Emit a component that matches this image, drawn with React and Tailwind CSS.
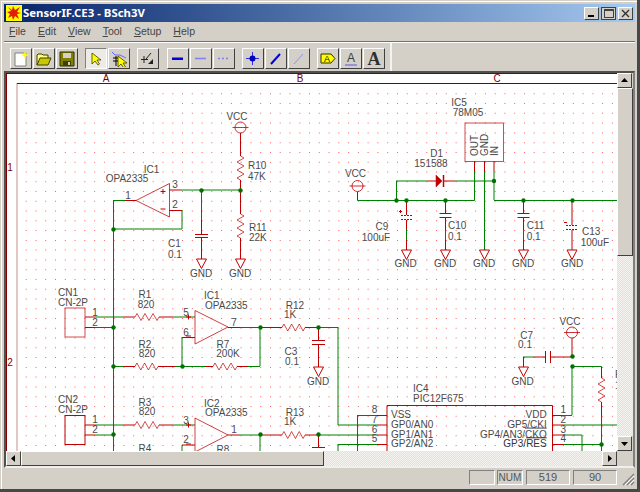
const G = '#008000'
const R = '#c00000'

// [x1, y1, x2, y2, colour]; integer coords give the pale, two-pixel lines of the picture
const wires = [
  // IC1 upper
  [240.5, 133, 240.5, 156, R], [240.5, 180, 240.5, 190, R], [169, 190, 181, 190, R], [181, 190, 240.5, 190, G],
  [201.5, 190, 201.5, 220, G], [201.5, 220, 201.5, 234, R], [201.5, 237, 201.5, 259, R],
  [240.5, 190, 240.5, 214, R], [240.5, 238, 240.5, 259, R],
  [125, 200.5, 136, 200.5, R], [113.5, 200.5, 125, 200.5, G], [113.5, 200, 113.5, 451, G],
  [169, 210.5, 182, 210.5, R], [182, 210, 182, 229, G], [113.5, 229, 182, 229, G],
  // CN1, IC1 lower
  [85, 317, 95, 317, R], [95, 317, 123, 317, G], [123, 317, 135, 317, R], [159, 317, 173, 317, R], [173, 317, 195, 317, G],
  [85, 327.5, 95, 327.5, R], [95, 327.5, 113.5, 327.5, G],
  [228, 327.5, 240, 327.5, R], [240, 327.5, 260, 327.5, G], [260, 327.5, 282, 327.5, R], [305, 327.5, 318, 327.5, R],
  [182, 337.5, 195, 337.5, R], [182, 337, 182, 366, G],
  [113.5, 366.5, 124, 366.5, G], [124, 366.5, 135, 366.5, R], [158, 366.5, 175, 366.5, R], [175, 366.5, 205, 366.5, G],
  [205, 366.5, 213, 366.5, R], [237, 366.5, 248, 366.5, R], [248, 366.5, 260, 366.5, G], [260, 327, 260, 366, G],
  [318.5, 327, 318.5, 340, R], [318.5, 344, 318.5, 367, R],
  // CN2, IC2
  [85, 425, 95, 425, R], [95, 425, 123, 425, G], [123, 425, 135, 425, R], [159, 425, 173, 425, R], [173, 425, 195, 425, G],
  [85, 435, 95, 435, R], [95, 435, 113.5, 435, G],
  [228, 435, 240, 435, R], [240, 435, 260, 435, G], [260, 435, 282, 435, R], [305, 435, 318, 435, R],
  [182, 445, 195, 445, R], [182, 445, 182, 451, G], [260, 435, 260, 451, G], [318.5, 435, 318.5, 447, R],
  // power input
  [357.5, 192, 357.5, 200.5, R], [357.5, 200.5, 474.5, 200.5, G], [474.5, 172, 474.5, 200.5, G], [474.5, 161, 474.5, 172, R],
  [396.5, 181, 396.5, 200.5, G], [396, 181, 428, 181, G], [428, 181, 436, 181, R], [443, 181, 455, 181, R], [455, 181, 494, 181, G],
  [484.5, 161, 484.5, 172, R], [484.5, 172, 484.5, 250, G], [494, 161, 494, 172, R], [494, 172, 494, 200, G],
  [494, 200.5, 617, 200.5, G],
  [406.5, 200, 406.5, 215, R], [406.5, 220, 406.5, 230, R], [406.5, 230, 406.5, 240, G], [406.5, 240, 406.5, 250, R],
  [445.5, 200, 445.5, 213, R], [445.5, 217, 445.5, 230, R], [445.5, 230, 445.5, 240, G], [445.5, 240, 445.5, 250, R],
  [523.5, 200, 523.5, 213, R], [523.5, 217, 523.5, 230, R], [523.5, 230, 523.5, 240, G], [523.5, 240, 523.5, 250, R],
  [572, 200, 572, 225, R], [572, 230, 572, 250, R],
  // IC4 and around it
  [318, 327.5, 338, 327.5, G], [338, 327, 338, 425, G], [338, 425, 377, 425, G], [377, 425, 387, 425, R],
  [357.5, 415.5, 377, 415.5, G], [377, 415.5, 387, 415.5, R], [357.5, 415, 357.5, 451, G],
  [318, 435, 377, 435, G], [377, 435, 387, 435, R], [338, 444.5, 377, 444.5, G], [377, 444.5, 387, 444.5, R], [338, 444, 338, 451, G],
  [553, 415.5, 563, 415.5, R], [563, 415.5, 572, 415.5, G], [572, 366, 572, 415, G], [572, 338, 572, 357, R],
  [553, 425, 563, 425, R], [563, 425, 617, 425, G], [553, 435, 563, 435, R], [563, 435, 582, 435, G], [582, 435, 582, 451, G],
  [553, 444.5, 563, 444.5, R], [563, 444.5, 601.5, 444.5, G], [601.5, 444, 601.5, 451, G], [601.5, 415, 601.5, 444, G],
  [601.5, 402, 601.5, 415, R], [601.5, 366.5, 601.5, 378, R], [572, 366.5, 601.5, 366.5, G],
  [550, 357, 572, 357, R], [533, 357, 545, 357, R], [523, 357, 533, 357, G], [523.5, 357, 523.5, 367, R],
]

const dots = [
  [113.5, 229.5], [201.5, 190.5], [240.5, 190.5], [113.5, 327.5], [113.5, 366.5], [182.5, 366.5], [260.5, 327.5], [318.5, 327.5],
  [113.5, 434.5], [260.5, 434.5], [318.5, 434.5], [396.5, 200.5], [406.5, 200.5], [445.5, 200.5], [494, 181], [523.5, 200.5],
  [572.5, 200.5], [572.5, 356.5], [572.5, 366.5], [601.5, 444.5],
]

const gndMarks = [
  [201.5, 259], [240.5, 259], [406.5, 250], [445.5, 250], [484.5, 250], [523.5, 250], [572, 250], [318.5, 367], [523.5, 367],
]

// [x, y centre, text, anchor]
const labels = [
  [237, 116, 'VCC', 'middle'], [248, 165, 'R10'], [248, 176, '47K'], [249, 227, 'R11'], [249, 237, '22K'],
  [151.5, 169, 'IC1', 'middle'], [127, 178, 'OPA2335', 'middle'], [175, 184, '3', 'middle'], [175, 204, '2', 'middle'], [128, 195, '1', 'middle'],
  [168, 243, 'C1'], [168, 254, '0.1'],
  [201, 273, 'GND', 'middle'], [240, 273, 'GND', 'middle'], [405.7, 263.5, 'GND', 'middle'], [445, 263.5, 'GND', 'middle'],
  [484, 263.5, 'GND', 'middle'], [523, 263.5, 'GND', 'middle'], [572, 263.5, 'GND', 'middle'], [318, 381, 'GND', 'middle'], [522.7, 381, 'GND', 'middle'],
  [58, 292, 'CN1'], [58, 302, 'CN-2P'], [95, 312, '1', 'middle'], [95, 322, '2', 'middle'], [145, 294, 'R1', 'middle'], [146, 304, '820', 'middle'],
  [204, 295, 'IC1'], [205, 305, 'OPA2335'], [186, 312, '5', 'middle'], [186, 332, '6', 'middle'], [234, 322, '7', 'middle'],
  [295, 305, 'R12', 'middle'], [290, 314, '1K', 'middle'], [145, 344, 'R2', 'middle'], [147, 353, '820', 'middle'],
  [223, 344, 'R7', 'middle'], [228, 353, '200K', 'middle'], [291, 351, 'C3', 'middle'], [292, 361, '0.1', 'middle'],
  [58, 399, 'CN2'], [58, 409, 'CN-2P'], [95, 419, '1', 'middle'], [95, 429, '2', 'middle'], [145, 402, 'R3', 'middle'], [147, 411, '820', 'middle'],
  [204, 403, 'IC2'], [205, 412, 'OPA2335'], [186, 420, '3', 'middle'], [186, 439, '2', 'middle'], [234, 429, '1', 'middle'],
  [295, 412, 'R13', 'middle'], [290, 421, '1K', 'middle'], [145, 448, 'R4', 'middle'], [223, 449, 'R8', 'middle'],
  [459, 102, 'IC5', 'middle'], [468, 112, '78M05', 'middle'], [355.5, 173, 'VCC', 'middle'], [436.7, 153, 'D1', 'middle'], [431, 163, '151588', 'middle'],
  [382, 226, 'C9', 'middle'], [376, 237, '100uF', 'middle'], [448, 225, 'C10'], [448, 236, '0.1'], [526.7, 225, 'C11'], [526.7, 236, '0.1'],
  [582, 231, 'C13'], [580.7, 242, '100uF'],
  [570, 321, 'VCC', 'middle'], [526.7, 335, 'C7', 'middle'], [525, 344, '0.1', 'middle'], [615, 374, 'R'], [615, 385, '1'],
  [413, 388, 'IC4'], [413, 398, 'PIC12F675'],
  [374.5, 409, '8', 'middle'], [374.5, 419, '7', 'middle'], [374.5, 429, '6', 'middle'], [374.5, 438.6, '5', 'middle'],
  [391, 414.7, 'VSS'], [391, 424.3, 'GP0/AN0'], [391, 434, 'GP1/AN1'], [391, 443.7, 'GP2/AN2'],
  [546.7, 414.7, 'VDD', 'end'], [546.7, 424.3, 'GP5/CKI', 'end'],
  [563.3, 409, '1', 'middle'], [563.3, 419, '2', 'middle'], [563.3, 429, '3', 'middle'], [563.3, 438.6, '4', 'middle'],
]

const gridDots = (() => {
  let d = ''
  for (let x = 25.7; x < 617; x += 9.77) {
    for (let y = 93.3; y < 451; y += 9.77) d += `M${x.toFixed(1)} ${y.toFixed(1)}h1v1h-1z`
  }
  return d
})()

function zigH(x1, x2, y) {
  const s = (x2 - x1) / 6
  let d = `M${x1} ${y}`
  for (let i = 0; i < 6; i++) d += `L${x1 + s * (i + 0.5)} ${y + (i % 2 ? 3.5 : -3.5)}`
  return d + `L${x2} ${y}`
}

function zigV(x, y1, y2) {
  const s = (y2 - y1) / 6
  let d = `M${x} ${y1}`
  for (let i = 0; i < 6; i++) d += `L${x + (i % 2 ? -3.5 : 3.5)} ${y1 + s * (i + 0.5)}`
  return d + `L${x} ${y2}`
}

const resistors = [
  zigV(240.5, 156, 180), zigV(240.5, 214, 238), zigV(601.5, 378, 402),
  zigH(135, 159, 317), zigH(135, 158, 366.5), zigH(213, 237, 366.5), zigH(282, 305, 327.5),
  zigH(135, 159, 425), zigH(282, 305, 435),
]

function OpAmp({ tipX, tipY, top, bottom, plusY, minusY, baseX }) {
  const midX = baseX - 6.5
  return (
    <g>
      <path d={`M${baseX} ${top}L${tipX} ${tipY}L${baseX} ${bottom}Z`} fill="none" stroke={R} strokeOpacity="0.75" />
      <path d={`M${midX - 2.5} ${plusY}h5M${midX} ${plusY - 2.5}v5M${midX - 2.5} ${minusY}h5`} stroke={R} fill="none" />
    </g>
  )
}

function VccMark({ x, y }) {
  return (
    <g fill="none" stroke={R} strokeOpacity="0.8">
      <circle cx={x} cy={y} r="5.5" />
      <path d={`M${x - 8} ${y}h16`} />
    </g>
  )
}

function Schematic() {
  return (
    <svg width="611" height="378" viewBox="6 73 611 378" className="block text-[10px]">
      <rect x="6" y="73" width="611" height="378" fill="#fff" />
      <path d={gridDots} fill="#ff2020" fillOpacity="0.7" />
      <path d="M6 73.5H617M17 83.5H617M6.5 73V451" stroke="#800000" fill="none" />
      <path d="M17 83V451" stroke="#800000" strokeOpacity="0.45" fill="none" />
      <g fill="#800000" textAnchor="middle">
        <text x="106" y="82">A</text>
        <text x="300" y="82">B</text>
        <text x="497" y="82">C</text>
        <text x="10" y="171">1</text>
        <text x="10" y="366">2</text>
      </g>

      {wires.map(([x1, y1, x2, y2, c], i) => (
        <line key={i} x1={x1} y1={y1} x2={x2} y2={y2} stroke={c} />
      ))}
      {resistors.map((d, i) => (
        <path key={i} d={d} fill="none" stroke={R} strokeOpacity="0.7" />
      ))}

      <OpAmp tipX={136} tipY={200.5} top={183.5} bottom={217} baseX={169.5} plusY={191.5} minusY={209} />
      <OpAmp tipX={228} tipY={327} top={310.5} bottom={344} baseX={195} plusY={317} minusY={336} />
      <OpAmp tipX={228} tipY={435} top={418} bottom={452} baseX={195} plusY={425} minusY={444} />

      <VccMark x={240.5} y={127.5} />
      <VccMark x={357.5} y={186} />
      <VccMark x={572} y={332.5} />

      {gndMarks.map(([x, y], i) => (
        <path key={i} d={`M${x - 5} ${y}h10l-5 9.5z`} fill="#fff" stroke={R} />
      ))}

      {dots.map(([x, y], i) => (
        <circle key={i} cx={x} cy={y} r="2.2" fill="#007000" />
      ))}

      {/* capacitors */}
      <path
        d="M195 234.5h13M195 237.5h13M312 340.5h13M312 344.5h13M312 447.5h13M439.5 213.5h12M439.5 217.5h12M517.5 213.5h12M517.5 217.5h12M545.5 351v12M550.5 351v12"
        stroke={R}
        fill="none"
      />
      <path d="M401 215.5h11M401 219.5h11M566 225.5h12M566 229.5h12" stroke={R} strokeDasharray="2 1" fill="none" />
      <path d="M399 211.5h3M400.5 210v3M564 222.5h3" stroke={R} fill="none" />

      {/* diode */}
      <path d="M436 175l6 6-6 6z" fill={R} stroke={R} strokeWidth="0.5" />
      <path d="M443.5 175v12" stroke={R} strokeWidth="1.5" />

      {/* connectors and packages */}
      <g fill="none" stroke={R}>
        <rect x="65" y="308" width="20" height="29" strokeOpacity="0.7" />
        <rect x="65" y="415.5" width="20" height="29" />
        <rect x="465" y="123" width="38.5" height="38.5" strokeOpacity="0.7" />
        <path d="M387 451V405.5H552.5V451" />
      </g>

      {labels.map(([x, y, t, a], i) => (
        <text key={i} x={x} y={y + 3.6} textAnchor={a || 'start'} fill="#4a4a4a">
          {t}
        </text>
      ))}
      <text x="546.7" y="437.6" textAnchor="end" fill="#4a4a4a">
        GP4/AN3/<tspan textDecoration="overline">CKO</tspan>
      </text>
      <text x="546.7" y="447.3" textAnchor="end" fill="#333">
        GP3/<tspan textDecoration="overline">RES</tspan>
      </text>
      <text transform="translate(478.2 156) rotate(-90)" fill="#4a4a4a">OUT</text>
      <text transform="translate(487.8 156) rotate(-90)" fill="#4a4a4a">GND</text>
      <text transform="translate(497.5 156) rotate(-90)" fill="#4a4a4a">IN</text>
    </svg>
  )
}

function Btn({ active, children }) {
  return (
    <div
      className={`flex h-[21px] w-[22px] items-center justify-center border ${
        active
          ? 'border-t-[#808080] border-l-[#808080] border-r-white border-b-white bg-[#ecebe6]'
          : 'border-t-white border-l-white border-r-[#404040] border-b-[#404040]'
      }`}
    >
      {children}
    </div>
  )
}

function Icon({ children }) {
  return (
    <svg width="16" height="16" viewBox="0 0 16 16" className="block">
      {children}
    </svg>
  )
}

function Arrow({ ox = 0, oy = 0 }) {
  return <path d={`M${4 + ox} ${2 + oy}v11l3-3 3 4 1.5-1-2.5-4h4z`} fill="#ffff00" stroke="#404000" strokeWidth="0.8" />
}

function Toolbar() {
  return (
    <div className="flex h-[28px] w-[388px] border-r-2 border-r-[#f4f3ef] pl-[6px] pt-[5px]">
      <Btn>
        <Icon>
          <path d="M2 2h11v13H2z" fill="#fff" stroke="#808080" />
          <path d="M12 0l1 3 3 1-3 1-1 3-1-3-3-1 3-1z" fill="#ffff00" />
        </Icon>
      </Btn>
      <div className="ml-px">
        <Btn>
          <Icon>
            <path d="M1 14V4l1-1h4l1 1h5v3" fill="#ffff80" stroke="#404000" />
            <path d="M1 14l3-7h11l-3 7z" fill="#c8c800" stroke="#404000" />
          </Icon>
        </Btn>
      </div>
      <div className="ml-px">
        <Btn>
          <Icon>
            <path d="M1 1h14v14H1z" fill="#808000" stroke="#303000" />
            <path d="M4 2h8v5H4z" fill="#d4d0c8" />
            <path d="M4 10h8v5H4z" fill="#404000" />
            <path d="M9 11h2v3H9z" fill="#d4d0c8" />
          </Icon>
        </Btn>
      </div>

      <div className="ml-[7px]">
        <Btn active>
          <Icon>
            <Arrow />
          </Icon>
        </Btn>
      </div>
      <div className="ml-px">
        <Btn>
          <Icon>
            <path d="M1 1l3 3h5l6 3" fill="none" stroke="#6666ff" />
            <path d="M2 7h7M2 10h7M5 5v10" stroke="#000" fill="none" />
            <Arrow ox={3} oy={3} />
          </Icon>
        </Btn>
      </div>

      <div className="ml-[7px]">
        <Btn>
          <Icon>
            <path d="M1 8.5h7M4 5v7M11 2L6 8" stroke="#202020" fill="none" />
            <path d="M8 13l5-5v5z" fill="#202020" />
          </Icon>
        </Btn>
      </div>

      <div className="ml-[8px]">
        <Btn>
          <Icon>
            <path d="M2 6.5h11v2.5H2z" fill="#0000e0" />
          </Icon>
        </Btn>
      </div>
      <div className="ml-px">
        <Btn>
          <Icon>
            <path d="M2 7.5h11" stroke="#8080f0" strokeWidth="1.5" />
          </Icon>
        </Btn>
      </div>
      <div className="ml-px">
        <Btn>
          <Icon>
            <path d="M2 7.5h11" stroke="#8080f0" strokeWidth="1.5" strokeDasharray="2 2" />
          </Icon>
        </Btn>
      </div>

      <div className="ml-[7px]">
        <Btn>
          <Icon>
            <path d="M1 7.5h13M7.5 1v13" stroke="#3030e0" />
            <circle cx="7.5" cy="7.5" r="3" fill="#0000c0" />
          </Icon>
        </Btn>
      </div>
      <div className="ml-px">
        <Btn>
          <Icon>
            <path d="M3 13L12 3" stroke="#0000e0" strokeWidth="2" />
          </Icon>
        </Btn>
      </div>
      <div className="ml-px">
        <Btn>
          <Icon>
            <path d="M3 13L12 3" stroke="#9090f0" />
          </Icon>
        </Btn>
      </div>

      <div className="ml-[7px]">
        <Btn>
          <Icon>
            <path d="M1 3h10l4 4.5-4 4.5H1z" fill="#ffff00" stroke="#303000" />
            <text x="7" y="11" textAnchor="middle" className="text-[9px]" fill="#101010">A</text>
          </Icon>
        </Btn>
      </div>
      <div className="ml-px">
        <Btn>
          <Icon>
            <text x="8" y="11" textAnchor="middle" className="text-[12px]" fill="#404040">A</text>
            <path d="M2 14h12" stroke="#8080e0" strokeWidth="1.5" />
          </Icon>
        </Btn>
      </div>
      <div className="ml-px">
        <Btn>
          <span className="font-['Liberation_Serif',serif] text-[18px] leading-none font-bold text-[#303030]">A</span>
        </Btn>
      </div>
    </div>
  )
}

function TitleButton({ children, flat }) {
  return (
    <div
      className={`flex h-[13px] w-[15px] items-center justify-center border bg-[#d4d0c8] ${
        flat ? 'border-[#404040]' : 'border-t-white border-l-white border-r-[#404040] border-b-[#404040]'
      }`}
    >
      {children}
    </div>
  )
}

function ScrollButton({ d }) {
  return (
    <div className="flex h-[15px] w-[15px] shrink-0 items-center justify-center border border-t-white border-l-white border-r-[#404040] border-b-[#404040] bg-[#d4d0c8]">
      <svg width="9" height="9" viewBox="0 0 9 9" className="block">
        <path d={d} fill="#000" />
      </svg>
    </div>
  )
}

function Pane({ className, children }) {
  return (
    <div
      className={`flex h-[15px] items-center justify-center border border-t-[#808080] border-l-[#808080] border-r-white border-b-white text-[#555] ${className}`}
    >
      {children}
    </div>
  )
}

const dither = 'bg-[repeating-conic-gradient(#f4f3f0_0_25%,#e2e0da_0_50%)] bg-[length:2px_2px]'

export default function App() {
  return (
    <div className="flex h-[492px] w-[640px] flex-col overflow-hidden border-r-[3px] border-b-[3px] border-[#484848] bg-[#d4d0c8] pt-[4px] pr-[2px] pl-[4px] font-['Liberation_Sans',sans-serif] shadow-[inset_1px_1px_0_#d4d0c8,inset_2px_2px_0_#fff]">
      {/* title bar */}
      <div className="flex h-[18px] shrink-0 items-center bg-gradient-to-r from-[#0a246a] to-[#a6caf0] pl-[2px]">
        <svg width="16" height="16" viewBox="0 0 16 16" className="block">
          <rect width="16" height="16" fill="#ffff00" />
          <path d="M2 2l4 3 1-4 2 4 5-3-3 5 4 1-4 1 2 5-4-3-2 4-1-4-4 2 2-4-3-2 4-1z" fill="#e02000" />
        </svg>
        <span className="ml-px font-['Noto_Sans',sans-serif] text-[11.4px] leading-none font-bold text-white">SensorIF.CE3 - BSch3V</span>
        <div className="ml-auto flex gap-[2px] pr-[2px]">
          <TitleButton>
            <div className="mt-[6px] mr-[2px] h-[2px] w-[6px] bg-black" />
          </TitleButton>
          <TitleButton flat>
            <div className="h-[9px] w-[10px] border border-t-2 border-[#404040]" />
          </TitleButton>
          <TitleButton>
            <svg width="9" height="9" viewBox="0 0 9 9" className="block">
              <path d="M1 1l7 7M8 1l-7 7" stroke="#303030" strokeWidth="1.3" />
            </svg>
          </TitleButton>
        </div>
      </div>

      {/* menu bar */}
      <div className="flex h-[19px] shrink-0 items-center gap-[12px] pl-[5px] text-[10.5px] text-[#444]">
        <span><u>F</u>ile</span>
        <span><u>E</u>dit</span>
        <span><u>V</u>iew</span>
        <span><u>T</u>ool</span>
        <span><u>S</u>etup</span>
        <span><u>H</u>elp</span>
      </div>
      <div className="h-[2px] shrink-0 border-t border-b border-t-[#707070] border-b-white" />

      <Toolbar />

      {/* client area */}
      <div className="flex h-[397px] shrink-0 flex-col border-2 border-t-[#505050] border-l-[#505050] border-r-[#808080] border-b-[#f0efeb]">
        <div className="flex h-[378px]">
          <Schematic />
          <div className="flex w-[16px] flex-col">
            <ScrollButton d="M4.5 2L8 6H1z" />
            <div className="h-[168px] border border-t-white border-l-white border-r-[#404040] border-b-[#404040] bg-[#d4d0c8]" />
            <div className={`flex-1 ${dither}`} />
            <ScrollButton d="M1 3h7L4.5 7z" />
          </div>
        </div>
        <div className="flex h-[15px]">
          <ScrollButton d="M6 1v7L2 4.5z" />
          <div className="w-[303px] border border-t-white border-l-white border-r-[#404040] border-b-[#404040] bg-[#d4d0c8]" />
          <div className={`w-[278px] ${dither}`} />
          <ScrollButton d="M3 1l4 3.5L3 8z" />
        </div>
      </div>

      {/* status bar */}
      <div className="flex flex-1 pt-[2px] pl-[465px] text-[11px]">
        <Pane className="w-[26px]" />
        <Pane className="ml-[2px] w-[26px] text-[10px]">NUM</Pane>
        <Pane className="ml-[3px] w-[44px]">519</Pane>
        <Pane className="ml-[3px] w-[44px]">90</Pane>
        <svg width="13" height="13" viewBox="0 0 13 13" className="mt-[3px] ml-[5px] block">
          <path d="M12 1L1 12M12 5L5 12M12 9L9 12" stroke="#808080" strokeWidth="1.4" />
          <path d="M12 3L3 12M12 7L7 12" stroke="#fff" />
        </svg>
      </div>
    </div>
  )
}
